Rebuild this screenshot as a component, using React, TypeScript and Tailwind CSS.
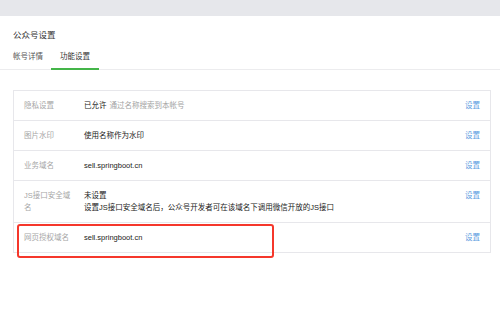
import React from 'react';

const font = { fontFamily: '"Liberation Sans", "Noto Sans CJK SC", sans-serif' };

type Row = {
  label: string;
  value: React.ReactNode;
};

const rows: Row[] = [
  {
    label: '隐私设置',
    value: (
      <span>
        <span className="text-[#222]">已允许</span>
        <span className="ml-[3px] text-[#a3a3a3]">通过名称搜索到本帐号</span>
      </span>
    ),
  },
  { label: '图片水印', value: <span className="text-[#222]">使用名称作为水印</span> },
  { label: '业务域名', value: <span className="text-[#222]">sell.springboot.cn</span> },
  {
    label: 'JS接口安全域名',
    value: (
      <div className="text-[#222]">
        <div>未设置</div>
        <div>设置JS接口安全域名后，公众号开发者可在该域名下调用微信开放的JS接口</div>
      </div>
    ),
  },
  { label: '网页授权域名', value: <span className="text-[#222]">sell.springboot.cn</span> },
];

const App: React.FC = () => {
  return (
    <div className="w-[500px] h-[317px] bg-white overflow-hidden" style={font}>
      {/* top strip */}
      <div className="h-4 bg-[#e6e7eb]" />

      {/* header */}
      <div className="pt-[13px] pl-[13px] text-[8.5px] leading-[12px] text-[#333]">公众号设置</div>

      {/* tabs */}
      <div className="mt-[10px] flex pl-[13px] border-b border-[#ececee] text-[7.5px] leading-[12px]">
        <div className="mr-[8px] pb-[6px] text-[#555]">帐号详情</div>
        <div className="px-[9px] pb-[5px] -mb-px border-b-2 border-[#44b549] text-[#333]">功能设置</div>
      </div>

      {/* settings table */}
      <div className="relative mt-[20px] ml-[13px] mr-[9px] border border-[#e7e7eb] text-[7.5px] leading-[12px]">
        {rows.map((row, i) => (
          <div
            key={row.label}
            className={`flex items-start pt-[9px] pb-[8px] pl-[10px] pr-[10px] ${i > 0 ? 'border-t border-[#e7e7eb]' : ''}`}
          >
            <div className="w-[60px] shrink-0 pr-[12px] text-[#a6a6a6]">{row.label}</div>
            <div className="flex-1">{row.value}</div>
            <div className="shrink-0 text-[#5b9be0]">设置</div>
          </div>
        ))}

        {/* red annotation box */}
        <div className="absolute left-[3px] top-[133px] w-[257px] h-[34px] rounded-[3px] border-[2.5px] border-[#f5372b]" />
      </div>
    </div>
  );
};

export default App;
